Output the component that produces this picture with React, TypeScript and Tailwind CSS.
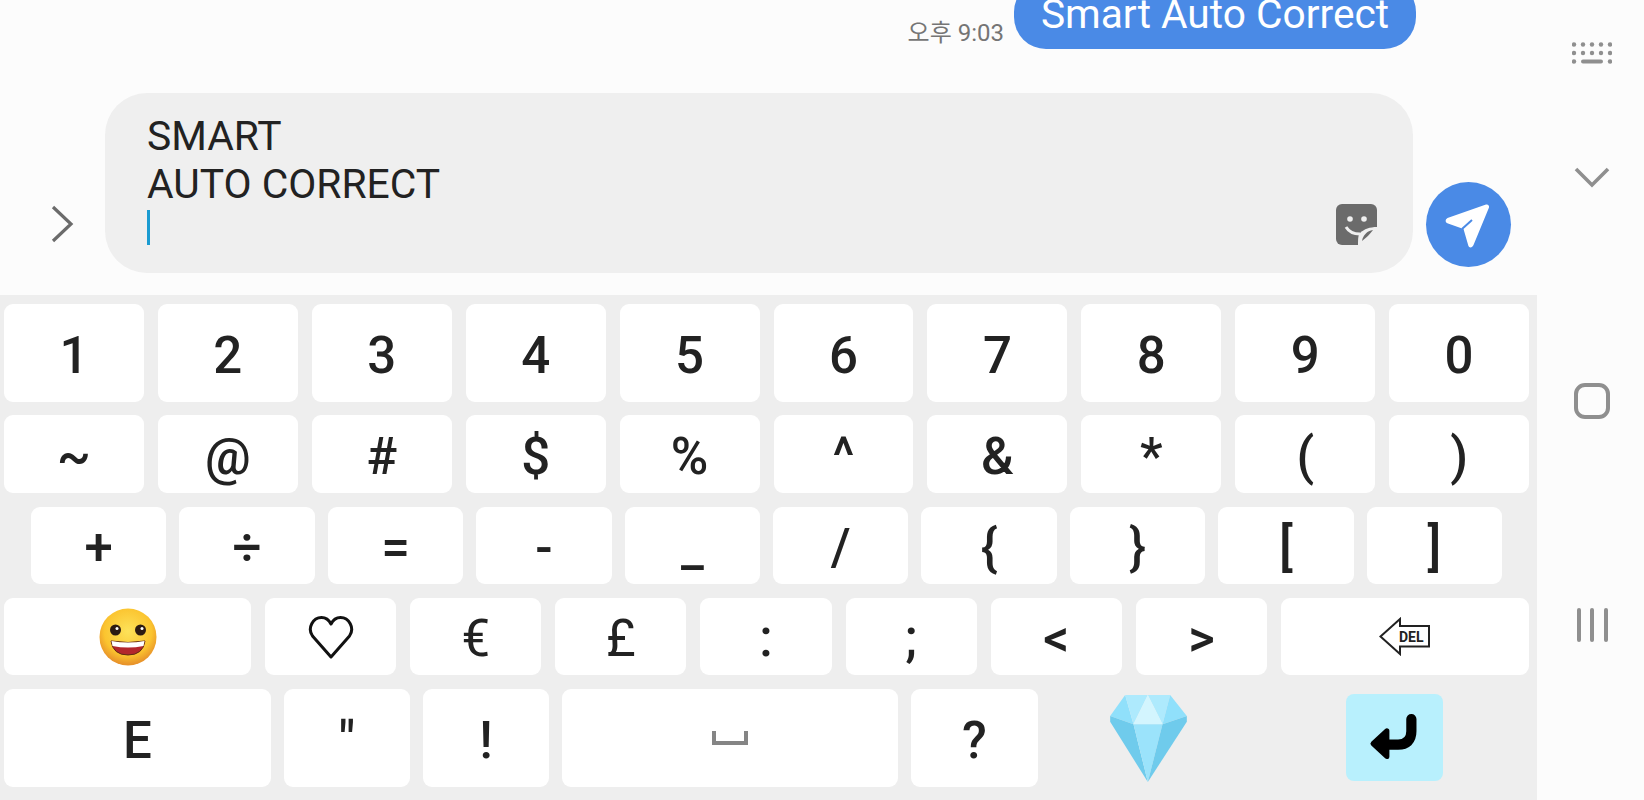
const font = "font-['Roboto','Noto_Sans_CJK_KR',sans-serif]";

const row1 = ["1", "2", "3", "4", "5", "6", "7", "8", "9", "0"];
const row2 = ["~", "@", "#", "$", "%", "^", "&", "*", "(", ")"];
const row3 = ["+", "÷", "=", "-", "_", "/", "{", "}", "[", "]"];
const currency = ["€", "£"];
const punctuation = [":", ";", "<", ">"];

function Key({ label, className = "flex-1" }: { label?: React.ReactNode; className?: string }) {
  return (
    <div className={`flex items-center justify-center rounded-[9px] bg-white text-[51px] leading-none text-[#222222] ${className}`}>
      {label}
    </div>
  );
}

function Smiley() {
  return (
    <svg width="58" height="58" viewBox="0 0 58 58">
      <defs>
        <radialGradient id="face" cx="50%" cy="40%" r="58%">
          <stop offset="0%" stopColor="#fde25a" />
          <stop offset="72%" stopColor="#fbc42f" />
          <stop offset="100%" stopColor="#e8932a" />
        </radialGradient>
      </defs>
      <circle cx="29" cy="29" r="28.5" fill="url(#face)" />
      <circle cx="16.5" cy="22" r="5.5" fill="#2c1a12" />
      <circle cx="41.5" cy="22" r="5.5" fill="#2c1a12" />
      <circle cx="18" cy="20.5" r="1.5" fill="#fff" />
      <circle cx="43" cy="20.5" r="1.5" fill="#fff" />
      <path d="M12 33 Q29 36 46 33 Q44 47 29 47 Q14 47 12 33Z" fill="#b3262c" stroke="#5e2a12" strokeWidth="1" />
      <path d="M12.5 33 Q29 36 45.5 33 L44.5 38 Q29 41 13.5 38Z" fill="#fff" />
    </svg>
  );
}

function Heart() {
  return (
    <svg width="46" height="46" viewBox="0 0 46 46" fill="none">
      <path d="M23 43 L4.5 22 C-1 14 5 3.5 13.5 3.5 C18 3.5 21 6 23 10 C25 6 28 3.5 32.5 3.5 C41 3.5 47 14 41.5 22Z" stroke="#111" strokeWidth="3" strokeLinejoin="round" />
    </svg>
  );
}

function DelIcon() {
  return (
    <svg width="52" height="39" viewBox="0 0 52 39" fill="none">
      <path d="M1.5 19.5 L21 2 L21 9 L50 9 L50 29.5 L21 29.5 L21 37 Z" stroke="#222" strokeWidth="2" fill="#fff" />
      <text x="20" y="25" fontFamily="Roboto, sans-serif" fontWeight="700" fontSize="14" fill="#222">DEL</text>
    </svg>
  );
}

function SpaceGlyph() {
  return (
    <svg width="36" height="14" viewBox="0 0 36 14" fill="none">
      <path d="M2 0 V12 H34 V0" stroke="#858585" strokeWidth="4" />
    </svg>
  );
}

function Diamond() {
  return (
    <svg width="77" height="87" viewBox="0 0 230 261">
      <path d="M45 0 L0 63 L70 88Z" fill="#90e0fb" />
      <path d="M45 0 H113 L70 88Z" fill="#aeeafd" />
      <path d="M113 0 H180 L157 88Z" fill="#aeeafd" />
      <path d="M180 0 L230 63 L157 88Z" fill="#90e0fb" />
      <path d="M113 0 L157 88 H70Z" fill="#d3f5fe" />
      <path d="M0 63 L70 88 L113 261 L0 80Z" fill="#6fcbec" />
      <path d="M70 88 H157 L113 261Z" fill="#9be3fb" />
      <path d="M230 63 L157 88 L113 261 L230 80Z" fill="#6fcbec" />
    </svg>
  );
}

function EnterIcon() {
  return (
    <svg width="50" height="47" viewBox="0 0 48 46" fill="none">
      <path d="M41 5 V17 C41 26 36 30 28 30 H14" stroke="#000" strokeWidth="10" strokeLinecap="round" />
      <path d="M3.5 29 L17 16.5 V41.5Z" fill="#000" stroke="#000" strokeWidth="5" strokeLinejoin="round" />
    </svg>
  );
}

function StickerIcon() {
  return (
    <svg className="self-end" width="41" height="41" viewBox="0 0 41 41">
      <rect width="41" height="41" rx="6" fill="#6b6b6b" />
      <path d="M22 41 C22 36 22 31 24 29 C28 25 34 23 41 23 V41Z" fill="#efefef" />
      <path d="M26 37 C27 31 31 27 37 26 C34 30 30 34 26 37Z" fill="#6b6b6b" />
      <circle cx="14" cy="15" r="2.8" fill="#efefef" />
      <circle cx="28" cy="15" r="2.8" fill="#efefef" />
      <path d="M10 23 C13 28 18 30 24 30" stroke="#efefef" strokeWidth="3" fill="none" />
    </svg>
  );
}

export default function App() {
  return (
    <div className={`flex h-[800px] w-[1644px] overflow-hidden bg-[#fcfcfc] ${font}`}>
      <div className="flex w-[1537px] flex-col">
        <div className="flex h-[93px] items-start justify-end gap-[10px] pr-[121px]">
          <span className="mt-[19px] text-[24px] leading-[28px] text-[#757575]">오후 9:03</span>
          <div className="-mt-[20px] flex h-[69px] w-[402px] items-center justify-center rounded-[32px] bg-[#4a8ae6] text-[40.7px] leading-none text-white">
            Smart Auto Correct
          </div>
        </div>

        <div className="flex h-[180px] items-end">
          <div className="flex h-full w-[105px] shrink-0 items-end pb-[30px] pl-[50px]">
            <svg width="24" height="38" viewBox="0 0 24 38" fill="none">
              <path d="M3 2 L21 19 L3 36" stroke="#6b6b6b" strokeWidth="3.2" />
            </svg>
          </div>
          <div className="flex h-full w-[1308px] shrink-0 justify-between rounded-[42px] bg-[#efefef] pt-[19px] pr-[36px] pb-[28px] pl-[42px]">
            <div className="flex flex-col">
              <div className="text-[40.8px] leading-[48px] text-[#222222]">
                SMART
                <br />
                AUTO CORRECT
              </div>
              <div className="mt-[2px] h-[50px] w-[3px] bg-[#1a9bd1]" />
            </div>
            <StickerIcon />
          </div>
          <div className="flex h-full flex-1 items-end pb-[6px] pl-[13px]">
            <div className="h-[85px] w-[85px] rounded-full bg-[#4a8ae6]">
              <svg width="85" height="85" viewBox="0 0 85 85">
                <path d="M60 22.5 C62 22 63.5 23.5 63 25.5 L47.5 63 C46 66.5 42.5 66 42 62.5 L37.5 47 L22 41.5 C19 40.5 19 37.5 21.5 36Z" fill="#fff" />
                <path d="M46 38 L36 47" stroke="#4a8ae6" strokeWidth="2" />
              </svg>
            </div>
          </div>
        </div>

        <div className="mt-[22px] flex flex-1 flex-col bg-[#eeeeee] pt-[9px] pr-[8px] pl-[4px]">
          <div className="flex h-[98px] gap-[14px]">
            {row1.map((k) => (
              <Key key={k} label={k} className="flex-1 pt-[4px] font-medium" />
            ))}
          </div>
          <div className="mt-[13px] flex h-[78px] gap-[14px]">
            {row2.map((k) => (
              <Key key={k} label={k} className="flex-1 pt-[5px] font-medium" />
            ))}
          </div>
          <div className="mt-[14px] flex h-[77px] gap-[13px] pr-[27px] pl-[27px]">
            {row3.map((k) => (
              <Key key={k} label={k} className="flex-1 pt-[3px] font-medium" />
            ))}
          </div>
          <div className="mt-[14px] flex h-[77px] gap-[14px]">
            <Key label={<Smiley />} className="w-[247px] shrink-0" />
            <Key label={<Heart />} />
            {currency.map((k) => (
              <Key key={k} label={k} className="flex-1 pt-[3px]" />
            ))}
            {punctuation.map((k) => (
              <Key key={k} label={k} className="flex-1 pt-[3px] font-medium" />
            ))}
            <Key label={<DelIcon />} className="w-[248px] shrink-0" />
          </div>
          <div className="mt-[14px] flex h-[98px] items-stretch gap-[13px]">
            <Key label="E" className="w-[267px] shrink-0 pt-[4px] font-medium" />
            <Key label={<span>&quot;</span>} className="w-[126px] shrink-0 pt-[4px] font-medium" />
            <Key label="!" className="w-[126px] shrink-0 pt-[4px] font-medium" />
            <Key label={<SpaceGlyph />} className="w-[336px] shrink-0" />
            <Key label="?" className="w-[127px] shrink-0 pt-[4px] font-medium" />
            <div className="flex w-[195px] shrink-0 items-center justify-center">
              <Diamond />
            </div>
            <div className="flex flex-1 items-center justify-center">
              <div className="mb-[2px] flex h-[87px] w-[97px] items-center justify-center rounded-[8px] bg-[#b8f0fd]">
                <EnterIcon />
              </div>
            </div>
          </div>
        </div>
      </div>

      <div className="flex flex-1 flex-col items-center pt-[42px] pl-[3px]">
        <svg width="40" height="22" viewBox="0 0 40 22" fill="#8f8f8f">
          {[2, 11, 20, 29, 38].map((x) => (
            <g key={x}>
              <circle cx={x} cy="2.5" r="2.2" />
              <circle cx={x} cy="11" r="2.2" />
            </g>
          ))}
          <circle cx="2" cy="19.5" r="2.2" />
          <circle cx="38" cy="19.5" r="2.2" />
          <rect x="9" y="17.5" width="22" height="4" rx="2" />
        </svg>
        <svg className="mt-[103px]" width="36" height="22" viewBox="0 0 36 22" fill="none">
          <path d="M2 2 L18 18 L34 2" stroke="#8f8f8f" strokeWidth="3.6" />
        </svg>
        <div className="mt-[194px] h-[36px] w-[36px] rounded-[11px] border-[4px] border-[#8f8f8f]" />
        <div className="mt-[189px] flex gap-[9.5px]">
          <div className="h-[34px] w-[4px] rounded-full bg-[#8f8f8f]" />
          <div className="h-[34px] w-[4px] rounded-full bg-[#8f8f8f]" />
          <div className="h-[34px] w-[4px] rounded-full bg-[#8f8f8f]" />
        </div>
      </div>
    </div>
  );
}
